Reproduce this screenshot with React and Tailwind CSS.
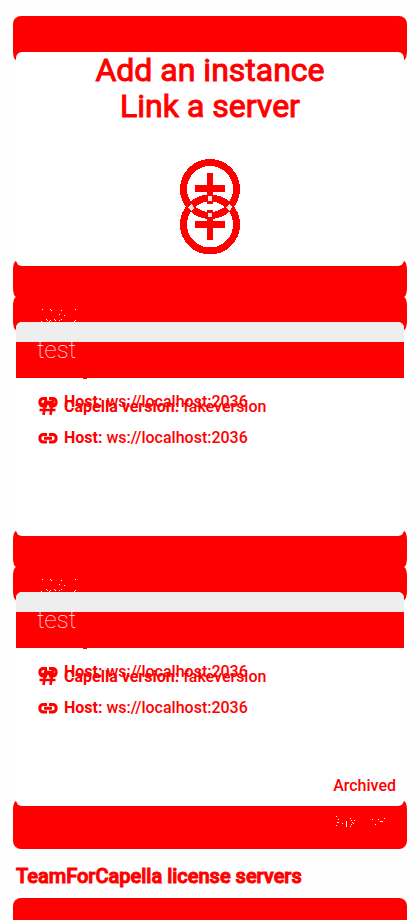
function Band({ className }) {
  return <div className={`bg-[#ff0000] ${className}`} />;
}

function Speckles({ points, className }) {
  return (
    <svg viewBox="0 0 60 16" className={`h-4 w-[60px] ${className}`} fill="#fff" shapeRendering="crispEdges" aria-hidden="true">
      {points.map(([x, y, w = 1, h = 1], i) => (
        <rect key={i} x={x} y={y} width={w} height={h} />
      ))}
    </svg>
  );
}

const titleDots = [
  [6, 1], [14, 1], [15, 2], [25, 2], [39, 1], [23, 6], [28, 7], [5, 13], [10, 11], [11, 12],
  [13, 13], [14, 12], [18, 11], [19, 12], [23, 12], [25, 11], [39, 12], [38, 13],
];

const archivedDots = [
  [0, 2], [2, 5], [1, 8, 2, 1], [0, 11], [-1, 12], [6, 9], [10, 7, 1, 6], [14, 4], [15, 6], [16, 8],
  [17, 9], [15, 10], [14, 12], [18, 6], [36, 5], [42, 5], [44, 7, 3, 1], [48, 4], [39, 10],
];

function AddIcon() {
  return (
    <svg viewBox="0 0 72 108" className="h-[108px] w-[72px]" fill="none" shapeRendering="crispEdges" aria-hidden="true">
      <g stroke="#ff0000" strokeWidth="7">
        <circle cx="36" cy="36" r="26.5" />
        <circle cx="36" cy="71.5" r="26.5" />
      </g>
      <g fill="#ff0000">
        <path d="M21 32h30v7H21zM33 20h6v31h-6zM21 68h30v7H21zM33 57h6v30h-6z" />
      </g>
      <g fill="#e6e6e6">
        <path d="M34 43h4v5h-4zM34 60h4v4h-4z" />
        <path d="M14 54l3-3 2 2 1 2-3 3-2-2zM58 54l-3-3-2 2-1 2 3 3 2-2z" />
      </g>
    </svg>
  );
}

function LinkIcon() {
  return (
    <svg viewBox="0 0 24 24" className="size-6" fill="none" stroke="#ff0000" strokeWidth="3" aria-hidden="true">
      <path d="M11 8.5H7a3.8 3.8 0 0 0 0 7.5h4M13 8.5h4a3.8 3.8 0 0 1 0 7.5h-4M8 12.2h8" />
    </svg>
  );
}

function TagIcon() {
  return (
    <svg viewBox="0 0 24 24" className="size-6" fill="none" stroke="#ff0000" strokeWidth="2.6" aria-hidden="true">
      <path d="M10 4L7.5 20M17 4l-2.5 16M5 9h16M3.5 15h16" />
    </svg>
  );
}

function Row({ icon: Icon, label, value, className }) {
  return (
    <div className={`flex h-6 items-center gap-1 pl-5 text-base leading-6 ${className}`}>
      <Icon />
      <span className="font-medium">
        <b className="font-bold">{label}:</b> {value}
      </span>
    </div>
  );
}

function Instance({ archived }) {
  return (
    <article>
      <Band className="h-[33px] rounded-[3px/9px]" />
      <div className="relative z-10 mx-[3px] -mt-2 flex min-h-[214px] flex-col rounded-md bg-white">
        <Speckles points={titleDots} className="absolute -top-[14px] left-5" />
        <div className="h-5 rounded-t-md bg-[#eeeeee]" />
        <div className="h-9 bg-[#ff0000] pl-[21px]">
          <h2 className="-mt-1 text-2xl leading-6 font-thin text-white">test</h2>
        </div>
        <div className="ml-[67px] h-px w-1 bg-[#ff0000]" />
        <Row icon={LinkIcon} label="Host" value="ws://localhost:2036" className="mt-[11px]" />
        <Row icon={TagIcon} label="Capella version" value="fakeversion" className="-mt-[19px]" />
        <Row icon={LinkIcon} label="Host" value="ws://localhost:2036" className="mt-[7px]" />
        {archived && (
          <>
            <p className="mt-auto pr-2 pb-2 text-right text-base leading-6 font-medium">Archived</p>
            <Speckles points={archivedDots} className="absolute right-2 -bottom-6" />
          </>
        )}
      </div>
      <Band
        className={
          archived
            ? "-mt-[5px] h-12 rounded-tl-[3px_9px] rounded-tr-[3px_9px] rounded-b-lg"
            : "-mt-[5px] h-9 rounded-[3px/9px]"
        }
      />
    </article>
  );
}

export default function App() {
  return (
    <main className="min-h-screen bg-[#fefefe] px-[13px] pt-4 font-['Roboto',sans-serif] text-[#ff0000]">
      <section>
        <Band className="h-11 rounded-t-lg rounded-br-[3px_9px] rounded-bl-[3px_9px]" />
        <div className="relative z-10 mx-[3px] -mt-2 flex min-h-[214px] flex-col items-center rounded-md bg-white text-center text-[32px] leading-9 [-webkit-text-stroke:1px_#ff0000]">
          <p>Add an instance</p>
          <p>Link a server</p>
          <div className="mt-[29px]">
            <AddIcon />
          </div>
        </div>
        <Band className="-mt-[5px] h-9 rounded-[3px/9px]" />
      </section>
      <Instance />
      <Instance archived />
      <h1 className="pt-[15px] pb-[9px] pl-[3px] text-xl leading-[25px] font-medium [-webkit-text-stroke:1px_#ff0000]">
        TeamForCapella license servers
      </h1>
      <Band className="h-[22px] rounded-t-lg" />
    </main>
  );
}
